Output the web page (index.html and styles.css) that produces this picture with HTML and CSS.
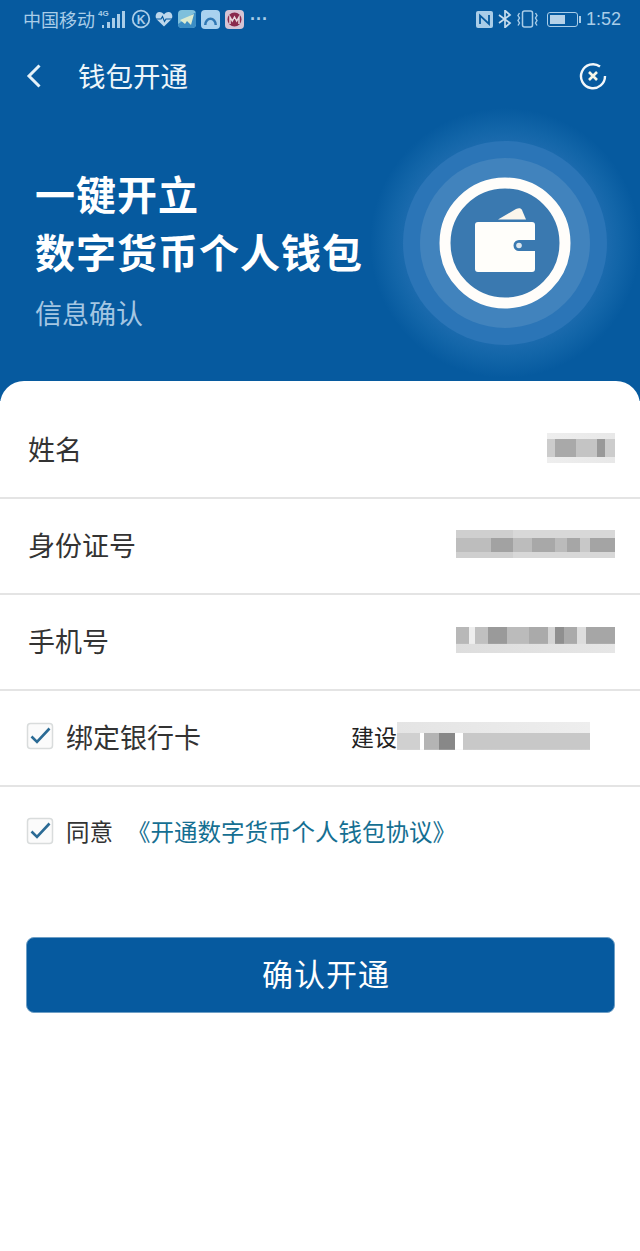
FILE: index.html
```html
<!DOCTYPE html>
<html lang="zh-CN">
<head>
    <meta charset="UTF-8">
    <meta name="viewport" content="width=device-width, initial-scale=1.0">
    <title>钱包开通</title>
    <link rel="stylesheet" href="styles.css">
</head>
<body>

<div class="top">
    <!-- Status bar -->
    <div class="status-bar">
        <span class="carrier">中国移动</span>
        <svg class="st-signal" width="28" height="22" viewBox="0 0 28 22">
            <text x="0" y="8" font-size="8" font-weight="700" font-family="Liberation Sans" fill="#a9cde8">4G</text>
            <g fill="#a9cde8">
                <rect x="4" y="17" width="2" height="3"/>
                <rect x="9" y="14" width="3" height="6"/>
                <rect x="14" y="10" width="3" height="10"/>
                <rect x="19" y="6" width="3" height="14"/>
                <rect x="24" y="3" width="3" height="17"/>
            </g>
        </svg>
        <svg class="st-k" width="20" height="20" viewBox="0 0 20 20">
            <circle cx="10" cy="10" r="8.3" fill="none" stroke="#a9cde8" stroke-width="1.8"/>
            <text x="10" y="14.5" text-anchor="middle" font-size="12" font-weight="700" font-family="Liberation Sans" fill="#a9cde8">K</text>
        </svg>
        <svg class="st-heart" width="18" height="16" viewBox="0 0 18 16">
            <path d="M9 15.5 1.8 8.4C-.5 6 .7 1 4.6 1 6.6 1 8 2 9 3.4 10 2 11.4 1 13.4 1c3.900 0 5.100 5 2.800 7.400Z" fill="#bcd7ec"/>
            <path d="M1 8h5l1.500-2.500 2 5L11 8h6" fill="none" stroke="#065a9f" stroke-width="1.200"/>
        </svg>
        <svg class="st-app" width="18" height="18" viewBox="0 0 18 18">
            <rect width="18" height="18" rx="4" fill="#7fc0dc"/>
            <path d="M0 14 18 2v12a4 4 0 0 1-4 4H4a4 4 0 0 1-4-4Z" fill="#3b8dc4"/>
            <path d="M2 10 16 4l-3 11-4-4-2 3Z" fill="#dcebd0"/>
        </svg>
        <svg class="st-app" width="19" height="19" viewBox="0 0 19 19">
            <rect width="19" height="19" rx="4" fill="#a9d2ef"/>
            <path d="M3 15a6.500 7.500 0 0 1 13 0h-2.500a4 5 0 0 0-8 0Z" fill="#2f78b4"/>
        </svg>
        <svg class="st-app" width="19" height="19" viewBox="0 0 19 19">
            <rect width="19" height="19" rx="4" fill="#d6c4d4"/>
            <circle cx="9.500" cy="9.500" r="7" fill="#8a2a4c"/>
            <path d="M5 14V7l2.300 4 2.200-4 2.200 4L14 7v7" fill="none" stroke="#e8d8dc" stroke-width="1.500"/>
        </svg>
        <span class="more">···</span>

        <div class="status-right">
            <svg width="17" height="17" viewBox="0 0 17 17">
                <rect width="17" height="17" rx="2" fill="#a9cde8"/>
                <path d="M4 13V4.500L13 13V4" fill="none" stroke="#065a9f" stroke-width="1.800"/>
            </svg>
            <svg width="14" height="18" viewBox="0 0 14 18">
                <path d="M1 5l11 8-5 4.500V.5l5 4.500L1 13" fill="none" stroke="#c6dcee" stroke-width="1.700"/>
            </svg>
            <svg width="21" height="18" viewBox="0 0 21 18">
                <rect x="5.500" y="1" width="10" height="16" rx="2" fill="none" stroke="#a9cde8" stroke-width="1.500"/>
                <path d="M2.500 3 1 5.500 2.500 8 1 10.500 2.500 13 1 15.500M18.500 3 20 5.500 18.500 8 20 10.500 18.500 13 20 15.500" fill="none" stroke="#a9cde8" stroke-width="1.400"/>
            </svg>
            <div class="battery"><div class="battery-level"></div></div>
            <div class="battery-tip"></div>
            <span class="clock">1:52</span>
        </div>
    </div>

    <!-- Title bar -->
    <div class="title-bar">
        <svg class="back" width="16" height="26" viewBox="0 0 16 26">
            <path d="M13.500 2.500 3 13l10.500 10.500" fill="none" stroke="#e4f1f8" stroke-width="3"/>
        </svg>
        <span class="title">钱包开通</span>
        <svg class="close" width="28" height="28" viewBox="0 0 28 28">
            <path d="M21 4.500A12 12 0 1 0 26 14" fill="none" stroke="#f2f7fa" stroke-width="2.400"/>
            <path d="M10 10l8 8M18 10l-8 8" stroke="#f6f6e8" stroke-width="2.600"/>
        </svg>
    </div>

    <!-- Hero -->
    <div class="hero">
        <div class="hero-text">
            <h1>一键开立<br>数字货币个人钱包</h1>
            <p>信息确认</p>
        </div>
        <svg class="medal" width="270" height="270" viewBox="-10 -10 270 270">
            <defs>
                <radialGradient id="glow">
                    <stop offset="0.7" stop-color="#1f6db0"/>
                    <stop offset="0.85" stop-color="#1265a8"/>
                    <stop offset="1" stop-color="#065a9f"/>
                </radialGradient>
            </defs>
            <circle cx="125" cy="125" r="135" fill="url(#glow)"/>
            <circle cx="125" cy="125" r="102" fill="#2b75b7"/>
            <circle cx="125" cy="125" r="85" fill="#4183bd"/>
            <circle cx="125" cy="125" r="60" fill="#3a79b0" stroke="#fffdfa" stroke-width="11"/>
            <path d="M118 101.500 136 91c3-1.500 5-1 6 1l4 9.500Z" fill="#fbf6ec"/>
            <path d="M98 104h54a3 3 0 0 1 3 3v15h-16a5.500 5.500 0 0 0 0 11h16v18a3 3 0 0 1-3 3H98a3 3 0 0 1-3-3v-44a3 3 0 0 1 3-3Z" fill="#fffefa"/>
            <circle cx="139" cy="127.500" r="2.800" fill="#dfe8ee"/>
        </svg>
    </div>
</div>

<!-- Form sheet -->
<div class="sheet">
    <div class="row">
        <span class="label">姓名</span>
        <div class="mosaic mosaic-name"></div>
    </div>
    <div class="row">
        <span class="label">身份证号</span>
        <div class="mosaic mosaic-id"></div>
    </div>
    <div class="row">
        <span class="label">手机号</span>
        <div class="mosaic mosaic-phone"></div>
    </div>
    <div class="row">
        <svg class="check" width="28" height="28" viewBox="0 0 28 28">
            <rect x="1.500" y="1.500" width="25" height="25" rx="3" fill="#fbfbfb" stroke="#d9dcdc" stroke-width="1.500"/>
            <path d="M5.500 14.500 11 20 23.500 6.500" fill="none" stroke="#2b6b95" stroke-width="2.600"/>
        </svg>
        <span class="label">绑定银行卡</span>
        <div class="bank">
            <span class="bank-name">建设</span>
            <div class="mosaic mosaic-bank"></div>
        </div>
    </div>

    <div class="agree">
        <svg class="check" width="28" height="28" viewBox="0 0 28 28">
            <rect x="1.500" y="1.500" width="25" height="25" rx="3" fill="#fbfbfb" stroke="#d9dcdc" stroke-width="1.500"/>
            <path d="M5.500 14.500 11 20 23.500 6.500" fill="none" stroke="#2b6b95" stroke-width="2.600"/>
        </svg>
        <span class="agree-text">同意</span>
        <a class="agree-link">《开通数字货币个人钱包协议》</a>
    </div>

    <button class="confirm" type="button">确认开通</button>
</div>

</body>
</html>
```
FILE: styles.css
```css
* {
    box-sizing: border-box;
}
body {
    margin: 0;
    background-color: white;
    font-family: "Noto Sans CJK SC", "Liberation Sans", sans-serif;
    color: #333;
}
.top {
    height: 401px;
    background-color: #065a9f;
    color: #eef6fa;
    overflow: hidden;
}

/* status bar */
.status-bar {
    height: 38px;
    display: flex;
    align-items: center;
    padding: 0 19px 0 23px;
    color: #a9cde8;
}
.carrier {
    font-size: 18px;
    width: 73px;
    white-space: nowrap;
}
.st-signal {
    margin-left: 2px;
}
.st-k {
    margin-left: 5px;
}
.st-heart {
    margin-left: 4px;
}
.st-app {
    margin-left: 5px;
}
.more {
    margin-left: 6px;
    font-size: 18px;
    font-family: "Liberation Sans", sans-serif;
    font-weight: 700;
}
.status-right {
    margin-left: auto;
    display: flex;
    align-items: center;
    gap: 5px;
}
.battery {
    width: 31px;
    height: 15px;
    margin-left: 4px;
    padding: 2px;
    border: 1px solid #a9cde8;
    border-radius: 3px;
}
.battery-level {
    width: 60%;
    height: 100%;
    background-color: #b6d2e8;
}
.battery-tip {
    width: 2px;
    height: 7px;
    margin-left: -4px;
    background-color: #a9cde8;
}
.clock {
    margin-left: 0;
    font-size: 18px;
    font-family: "Liberation Sans", sans-serif;
}

/* title bar */
.title-bar {
    height: 78px;
    display: flex;
    align-items: center;
    padding: 0 33px 0 26px;
}
.back {
    margin-top: -2px;
}
.title {
    margin-left: 36px;
    margin-top: -3px;
    font-size: 27.500px;
    line-height: 1;
}
.close {
    margin-left: auto;
    margin-top: -2px;
}

/* hero */
.hero {
    display: flex;
    align-items: flex-start;
    padding-left: 35px;
}
.hero-text {
    padding-top: 48px;
}
.hero-text h1 {
    margin: 0;
    font-size: 40px;
    line-height: 58px;
    letter-spacing: 1px;
    font-weight: 700;
    color: white;
    white-space: nowrap;
}
.hero-text p {
    margin: 15px 0 0;
    font-size: 27px;
    line-height: 36px;
    color: #a4c6e2;
}
.medal {
    flex: none;
    margin-left: auto;
    margin-right: 0;
    margin-top: -8px;
}

/* form sheet */
.sheet {
    position: relative;
    margin-top: -20px;
    padding-top: 22px;
    min-height: 870px;
    background-color: white;
    border-radius: 24px 24px 0 0;
}
.row {
    height: 96px;
    display: flex;
    align-items: center;
    padding: 0 25px 4px 28px;
    border-bottom: 2px solid #e4e4e4;
}
.label {
    font-size: 27px;
    white-space: nowrap;
    color: #333;
}
.check {
    flex: none;
    margin-left: -2px;
    margin-right: 12px;
}

/* blurred personal values */
.mosaic {
    margin-left: auto;
    background-repeat: no-repeat;
}
.mosaic-name {
    width: 68px;
    height: 30px;
    background-image:
        linear-gradient(90deg, #ccc 0 12%, #a9a9a9 12% 42%, #c4c4c4 42% 74%, #999 74% 86%, #ccc 86%),
        linear-gradient(90deg, #eee, #e8e8e8);
    background-size: 100% 60%, 100% 100%;
    background-position: 0 50%, 0 0;
}
.mosaic-id {
    width: 159px;
    height: 28px;
    background-image:
        linear-gradient(90deg, #bdbdbd 0 22%, #a2a2a2 22% 36%, #bcbcbc 36% 48%, #a8a8a8 48% 62%, #bbb 62% 70%, #a6a6a6 70% 78%, #c8c8c8 78% 84%, #a4a4a4 84%),
        linear-gradient(90deg, #cfcfcf 0 36%, #d8d8d8 36% 100%);
    background-size: 100% 50%, 100% 100%;
    background-position: 0 55%, 0 0;
}
.mosaic-phone {
    width: 159px;
    height: 26px;
    background-image:
        linear-gradient(90deg, #b8b8b8 0 8%, #eee 8% 12%, #c0c0c0 12% 20%, #9a9a9a 20% 32%, #bbb 32% 46%, #aaa 46% 58%, #d4d4d4 58% 62%, #8f8f8f 62% 68%, #aaa 68% 76%, #ddd 76% 82%, #a6a6a6 82%),
        linear-gradient(90deg, #ddd, #e6e6e6);
    background-size: 100% 65%, 100% 100%;
    background-position: 0 0, 0 0;
}
.bank {
    margin-left: auto;
    margin-right: 25px;
    display: flex;
    align-items: center;
}
.bank-name {
    font-size: 23px;
    white-space: nowrap;
    color: #222;
}
.mosaic-bank {
    width: 193px;
    height: 28px;
    background-image:
        linear-gradient(90deg, #d0d0d0 0 12%, white 12% 14%, #b4b4b4 14% 22%, #888 22% 30%, white 30% 34%, #c8c8c8 34% 100%),
        linear-gradient(90deg, #e4e4e4, #eee);
    background-size: 100% 60%, 100% 100%;
    background-position: 0 100%, 0 0;
}

/* agreement */
.agree {
    height: 88px;
    display: flex;
    align-items: center;
    padding-left: 28px;
}
.agree-text {
    font-size: 23.500px;
    color: #333;
}
.agree-link {
    margin-left: 14px;
    font-size: 23.500px;
    color: #156f92;
    white-space: nowrap;
}

/* confirm */
.confirm {
    display: block;
    width: 589px;
    height: 76px;
    margin: 62px 0 0 26px;
    padding: 0 0 6px 11px;
    border: 1px solid #6e9fc6;
    border-radius: 8px;
    background-color: #065a9f;
    color: white;
    font-family: inherit;
    font-size: 31px;
    letter-spacing: 1px;
}
```
